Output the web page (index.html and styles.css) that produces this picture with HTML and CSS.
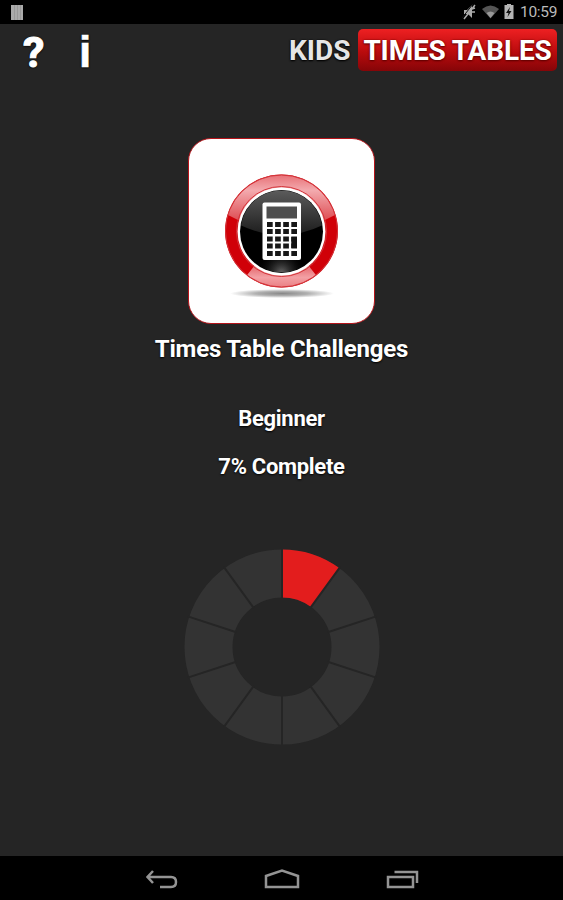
FILE: index.html
```html
<!DOCTYPE html>
<html lang="en">
<head>
  <meta charset="UTF-8">
  <title>Kids Times Tables</title>
  <link rel="stylesheet" href="styles.css">
</head>
<body>
<div class="status-bar">
  <svg class="status-app" width="12" height="15" viewBox="0 0 12 15">
    <rect width="12" height="15" fill="#aaa"/>
    <path d="M3.500 0v15M6.500 0v15M9.500 0v15" stroke="#999"/>
  </svg>
  <svg width="57" height="24" viewBox="0 0 57 24" class="status-icons">
    <!-- muted -->
    <path d="M2 10h3l5-5v13l-4-4H2z" fill="#aaa"/>
    <path d="M13 5L2 19M10 9l3-1M10 12h3" stroke="#aaa" stroke-width="1.500"/>
    <path d="M11 4L0 18" stroke="#111"/>
    <!-- wifi -->
    <path d="M20 9q8.500-7 17 0l-8.500 9.500z" fill="#555"/>
    <path d="M24.500 13q4-3 8 0l-4 5z" fill="#999"/>
    <!-- battery -->
    <path d="M42.500 5h2.500V4h4v1h2.500v14h-9z" fill="#b5b5b5"/>
    <path d="M48 7l-4 6h2.500l-1 4 4-6H47z" fill="#111"/>
  </svg>
  <span class="clock">10:59</span>
</div>

<div class="header">
  <div class="help">?</div>
  <div class="info">i</div>
  <div class="kids">KIDS</div>
  <div class="tables">TIMES TABLES</div>
</div>

<div class="main">
  <div class="card">
    <svg width="185" height="184" viewBox="189 139 185 184">
      <defs>
        <linearGradient id="shine" x1="0" y1="0" x2="0" y2="1">
          <stop offset="0" stop-color="#e66a70"/>
          <stop offset=".15" stop-color="#f3aaae"/>
          <stop offset=".42" stop-color="#dd4a50"/>
          <stop offset=".75" stop-color="#dd4a50"/>
          <stop offset=".9" stop-color="#f3a0a4"/>
          <stop offset="1" stop-color="#e87a7e"/>
        </linearGradient>
        <linearGradient id="glass" x1="0" y1="0" x2="0" y2="1">
          <stop offset="0" stop-color="#5c5c5c"/>
          <stop offset="1" stop-color="#1c1c1c"/>
        </linearGradient>
        <radialGradient id="glow" cx=".5" cy="1" r=".3">
          <stop offset="0" stop-color="#666"/>
          <stop offset="1" stop-color="#000" stop-opacity="0"/>
        </radialGradient>
        <radialGradient id="shadow">
          <stop offset="0" stop-color="#888"/>
          <stop offset=".5" stop-color="#b0b0b0"/>
          <stop offset="1" stop-color="#fff"/>
        </radialGradient>
        <clipPath id="ring"><circle cx="281.500" cy="231" r="56"/></clipPath>
        <clipPath id="disc"><circle cx="281.500" cy="231.500" r="41"/></clipPath>
      </defs>
      <ellipse cx="282" cy="293.500" rx="52" ry="4.500" fill="url(#shadow)"/>
      <circle cx="281.500" cy="231" r="56.500" fill="#d00008"/>
      <!-- lighter top and bottom of the ring -->
      <g clip-path="url(#ring)">
        <path d="M281.500 231L238 220 222 212V173h119v39l-16 8zM281.500 231L244 279v10h75v-10z" fill="url(#shine)"/>
      </g>
      <circle cx="281.500" cy="231" r="56" fill="none" stroke="#d3343a"/>
      <circle cx="281.500" cy="231.500" r="45" fill="none" stroke="#d3343a"/>
      <circle cx="281.500" cy="231.500" r="44" fill="#fff"/>
      <circle cx="281.500" cy="231.500" r="41.500" fill="#000"/>
      <g clip-path="url(#disc)">
        <path d="M240 190h83v35q-41.500 20-83 0z" fill="url(#glass)"/>
        <circle cx="281.500" cy="231.500" r="41" fill="url(#glow)"/>
      </g>
      <!-- calculator -->
      <rect x="262.500" y="202.500" width="38.500" height="57.500" rx="2" fill="#fff"/>
      <rect x="266.500" y="206.500" width="30.500" height="12" fill="#4e4e4e"/>
      <path d="M267 224.500h30M267 231.500h30M267 239h30M267 246h30M267 253.500h30" stroke="#181818" stroke-width="4.800" stroke-dasharray="5.700 2.400"/>
      <path d="M291.300 237v11h5.700v-11z" fill="#111"/>
    </svg>
  </div>
  <div class="title">Times Table Challenges</div>
  <div class="level">Beginner</div>
  <div class="complete">7% Complete</div>
  <svg class="chart" width="200" height="200" viewBox="-100 -100 200 200">
    <circle r="73.500" fill="none" stroke="#333" stroke-width="48"/>
    <path d="M0-97.500A97.500 97.500 0 0 1 57.310-78.880L29.100-40.050A49.500 49.500 0 0 0 0-49.500z" fill="#e31d1d"/>
    <path class="lines" d="M0-99V-48M0 48V99M58.200-80.100L28.200-38.800M94.200-30.600L45.700-14.800M94.200 30.600L45.700 14.800M58.200 80.100L28.200 38.800M-58.200 80.100L-28.200 38.800M-94.200 30.600L-45.700 14.800M-94.200-30.600L-45.700-14.800M-58.200-80.100L-28.200-38.800"/>
  </svg>
</div>

<div class="nav-bar">
  <svg width="563" height="44" viewBox="0 856 563 44">
    <path d="M153 871l-5.500 6 5.500 6M148 877h23q5 0 5 5t-5 5h-11"/>
    <path d="M266 887v-11l16-5.500 16 5.500v11z"/>
    <path d="M388 877h25v10h-25zM394.500 872h22.500v11"/>
  </svg>
</div>
</body>
</html>
```
FILE: styles.css
```css
* {
    box-sizing: border-box;
}

body {
    margin: 0;
    height: 900px;
    display: flex;
    flex-direction: column;
    overflow: hidden;
    background-color: #252525;
    color: #fff;
    font-family: Roboto, "Liberation Sans", sans-serif;
    font-weight: bold;
}

.status-bar {
    height: 24px;
    display: flex;
    align-items: center;
    background-color: #000;
}

.status-app {
    margin-left: 11px;
}

.status-icons {
    margin-left: 439px;
}

.clock {
    margin-left: 1px;
    font-size: 15.5px;
    font-weight: normal;
    line-height: 26px;
    letter-spacing: -0.3px;
    color: #bbb;
}

.header {
    height: 52px;
    display: flex;
    align-items: flex-start;
    padding-top: 5px;
    line-height: 43px;
    white-space: nowrap;
    text-shadow: 0 0 2px #000, 0 1px 2px #000;
}

.help {
    width: 57px;
    padding-left: 23px;
    font-size: 43px;
    line-height: 46px;
    -webkit-text-stroke: 1px #fff;
}

.info {
    width: 232px;
    padding-left: 22px;
    font-family: "Liberation Sans", sans-serif;
    font-size: 44px;
    line-height: 45px;
    -webkit-text-stroke: 0.6px #fff;
}

.kids {
    width: 69px;
    font-size: 28px;
    color: #e6e6e6;
}

.tables {
    width: 199px;
    height: 42px;
    border-radius: 5px;
    background: linear-gradient(#ee2022, #b90b0d 55%, #850508);
    font-size: 28px;
    letter-spacing: -0.15px;
    text-align: center;
    text-shadow: 0 0 2px #700, 0 1px 2px #500;
}

.main {
    flex: 1;
    display: flex;
    flex-direction: column;
    align-items: center;
    padding-top: 62px;
    text-shadow: 0 1px 2px #000;
}

.card {
    width: 187px;
    height: 186px;
    border: 1.5px solid #b5141a;
    border-radius: 23px;
    background-color: #fff;
    overflow: hidden;
}

.title {
    margin-top: 9px;
    font-size: 24px;
    line-height: 32px;
    letter-spacing: -0.18px;
}

.level {
    margin-top: 40px;
    font-size: 22px;
    line-height: 28px;
    letter-spacing: -0.3px;
}

.complete {
    margin-top: 20px;
    font-size: 22px;
    line-height: 28px;
    letter-spacing: -0.3px;
}

.chart {
    margin-top: 66px;
}

.lines {
    stroke: #252525;
    stroke-width: 2;
}

.nav-bar {
    height: 44px;
    background-color: #000;
}

.nav-bar path {
    fill: none;
    stroke: #949494;
    stroke-width: 2.5;
}
```
